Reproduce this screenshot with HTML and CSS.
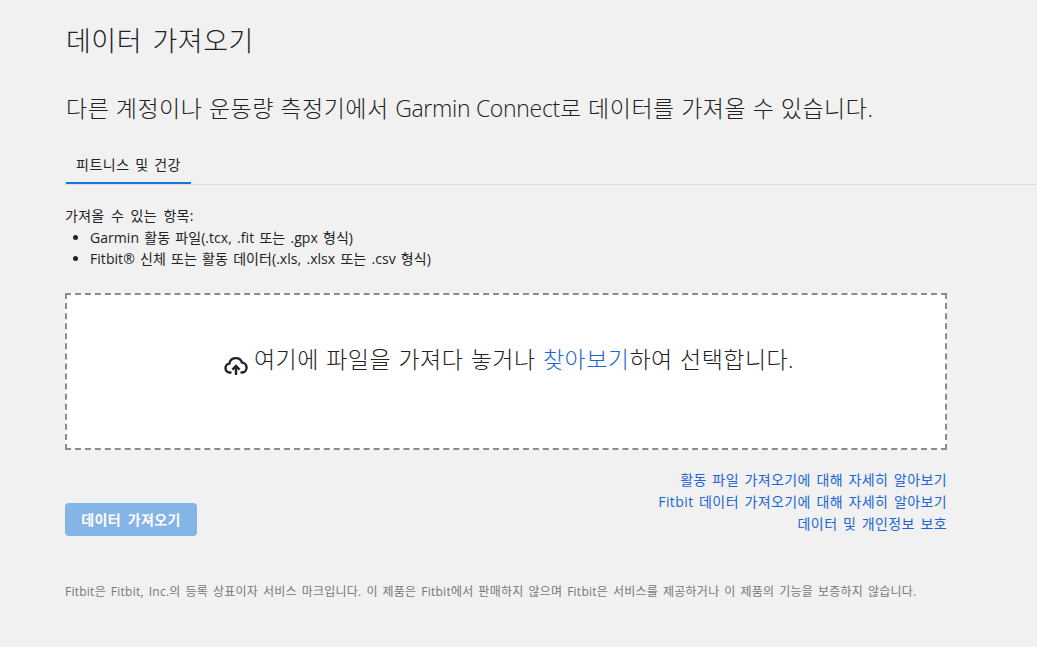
FILE: index.html
```html
<!DOCTYPE html>
<html lang="ko">
<head>
    <meta charset="UTF-8">
    <meta name="viewport" content="width=device-width, initial-scale=1.0">
    <title>데이터 가져오기</title>
    <link rel="stylesheet" href="styles.css">
</head>
<body>
    <div class="page">
        <h1>데이터 가져오기</h1>
        <h2>다른 계정이나 운동량 측정기에서 <span class="brand">Garmin Connect</span>로 데이터를 가져올 수 있습니다.</h2>

        <div class="tabs">
            <a class="tab active">피트니스 및 건강</a>
        </div>

        <div class="content">
            <div class="intro">
                <div class="intro-title">가져올 수 있는 항목:</div>
                <ul>
                    <li>Garmin 활동 파일(.tcx, .fit 또는 .gpx 형식)</li>
                    <li>Fitbit® 신체 또는 활동 데이터(.xls, .xlsx 또는 .csv 형식)</li>
                </ul>
            </div>

            <div class="dropzone">
                <svg class="upload-icon" viewBox="0 0 24 24" width="24" height="24" aria-hidden="true">
                    <path d="M6.5 18.5H6a4.5 4.5 0 0 1-.6-8.96A6.5 6.5 0 0 1 18 8.6a5 5 0 0 1 .5 9.9h-1" fill="none" stroke="#222" stroke-width="2.4" stroke-linecap="round"/>
                    <path d="M12 21v-8M8.4 15.6 12 12l3.600 3.600" fill="none" stroke="#222" stroke-width="2.400"/>
                </svg>
                <span>여기에 파일을 가져다 놓거나 <a href="#">찾아보기</a>하여 선택합니다.</span>
            </div>

            <div class="actions">
                <button type="button" disabled>데이터 가져오기</button>
                <div class="links">
                    <a href="#">활동 파일 가져오기에 대해 자세히 알아보기</a>
                    <a href="#">Fitbit 데이터 가져오기에 대해 자세히 알아보기</a>
                    <a href="#">데이터 및 개인정보 보호</a>
                </div>
            </div>

            <p class="note">Fitbit은 Fitbit, Inc.의 등록 상표이자 서비스 마크입니다. 이 제품은 Fitbit에서 판매하지 않으며 Fitbit은 서비스를 제공하거나 이 제품의 기능을 보증하지 않습니다.</p>
        </div>
    </div>
</body>
</html>
```

FILE: styles.css
```css
html, body { height: 100%; }
body { margin: 0; background: #f1f1f1; color: #222; font-family: "Open Sans", "Noto Sans CJK KR", sans-serif; font-size: 14px; overflow: hidden; }
.page { padding-left: 65px; }
h1 { margin: 0; padding-top: 22px; padding-left: 1px; font-size: 27px; line-height: 38px; font-weight: 300; letter-spacing: .5px; word-spacing: 3px; }
h2 { margin: 0; padding-top: 33px; padding-left: 1px; font-size: 23px; line-height: 30px; font-weight: 300; letter-spacing: .5px; }
.brand { letter-spacing: -.3px; }
.tabs { margin-top: 25px; border-bottom: 1px solid #dddddd; height: 36px; }
.tab { display: inline-block; box-sizing: border-box; height: 36px; margin-left: 1px; padding: 0 10px; line-height: 33px; border-bottom: 2px solid #1a73d9; margin-bottom: -1px; letter-spacing: .5px; word-spacing: 1.500px; }
.content { width: 882px; }
.intro { padding-top: 20px; line-height: 21.500px; letter-spacing: .05px; word-spacing: 1.500px; }
.intro-title { letter-spacing: .3px; word-spacing: 2.500px; }
.intro ul { margin: 0; padding-left: 25px; }
.dropzone { box-sizing: border-box; height: 157px; margin-top: 23px; background: #fff; border: 2px dashed #8c8c8c; display: flex; align-items: center; justify-content: center; gap: 6px; font-size: 23px; font-weight: 300; letter-spacing: .45px; word-spacing: 1px; padding-bottom: 26px; padding-left: 6px; }
.upload-icon { margin-top: 16px; }
.dropzone a { color: #1a66d6; text-decoration: none; }
.actions { display: flex; justify-content: space-between; margin-top: 19px; }
button { align-self: flex-end; width: 132px; height: 33px; margin-bottom: -1px; border: none; border-radius: 4px; background: #85b4e6; color: #fff; font: inherit; font-weight: 600; letter-spacing: .4px; word-spacing: 2.500px; }
.links { display: flex; flex-direction: column; align-items: flex-end; line-height: 22px; letter-spacing: .4px; word-spacing: 1.500px; }
.links a { color: #1a66d6; text-decoration: none; }
.note { margin: 0; padding-top: 48px; font-size: 12px; line-height: 18px; color: #777; letter-spacing: .25px; word-spacing: 1.500px; }
```
